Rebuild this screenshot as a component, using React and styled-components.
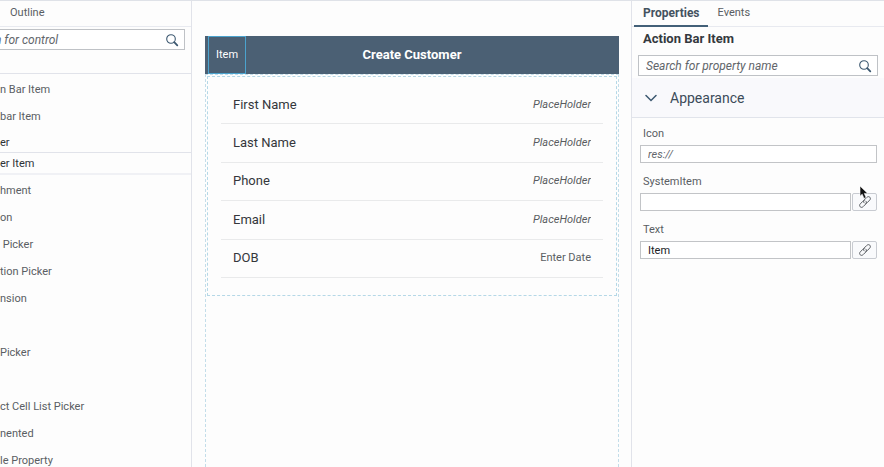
import React from "react";
import styled, { createGlobalStyle, css } from "styled-components";

const GlobalStyle = createGlobalStyle`
  *, *::before, *::after { box-sizing: border-box; }
  body {
    margin: 0;
    background: #fdfdfd;
    color: #5a5e63;
    font: 11px/16px Roboto, "Liberation Sans", sans-serif;
  }
  button, input { font: inherit; color: inherit; }
  input::placeholder { color: #62666b; font-style: italic; opacity: 1; }
`;

const Page = styled.div`
  display: flex;
  height: 100vh;
  overflow: hidden;
  border-top: 1px solid #dfe2e8;
`;

const Sidebar = styled.aside`
  flex: none;
  width: 192px;
  border-right: 1px solid #e1e3ea;
`;

const Canvas = styled.main`
  flex: 1;
  min-width: 0;
  display: flex;
  padding: 35px 12px 0 13px;
`;

const Inspector = styled.aside`
  flex: none;
  width: 253px;
  border-left: 1px solid #e1e3ea;
`;

const TabBar = styled.div`
  display: flex;
  height: 26px;
  padding: 0 2px;
  border-bottom: 1px solid #e8eaf0;
`;

const Tab = styled.button`
  height: 26px;
  padding: 0 10px;
  border: 0;
  border-bottom: 2px solid transparent;
  background: none;
  line-height: 24px;
  ${({ $active }) =>
    $active &&
    css`
      padding: 0 8px 0 9px;
      font-size: 12px;
      font-weight: 700;
      color: #44525f;
      border-bottom-color: #436078;
    `}
`;

const OutlineTab = styled(Tab)`
  padding: 0 8px;
`;

const SearchBox = styled.label`
  display: flex;
  align-items: center;
  height: 21px;
  padding-right: 5px;
  border: 1px solid #bfc2c6;
  background: #fff;
`;

const ControlSearch = styled(SearchBox)`
  margin: 2px 6px 0 0;
  border-left: 0;
`;

const PropertySearch = styled(SearchBox)`
  margin: 7px 6px 0;
`;

const SearchInput = styled.input`
  flex: 1;
  min-width: 0;
  height: 19px;
  padding: 0 0 0 7px;
  border: 0;
  outline: 0;
  background: none;
  font-size: 12px;
`;

const ControlSearchInput = styled(SearchInput)`
  padding-left: 0;
  text-indent: -5px;
`;

const ControlList = styled.ul`
  margin: 23px 0 0;
  padding: 2px 0 0;
  list-style: none;
  border-top: 1px solid #e1e3ea;
`;

const ControlItem = styled.li`
  height: 27px;
  line-height: 27px;
  white-space: pre;
  ${({ $heading }) =>
    $heading &&
    css`
      height: 22px;
      line-height: 25px;
      color: #2e3338;
    `}
  ${({ $selected }) =>
    $selected &&
    css`
      height: 23px;
      margin-bottom: 2px;
      line-height: 21px;
      color: #2e3338;
      border-top: 1px solid #e1e3ea;
      border-bottom: 2px solid #f0f1f5;
    `}
`;

const Device = styled.section`
  flex: 1;
  display: flex;
  flex-direction: column;
`;

const ActionBar = styled.header`
  display: grid;
  grid-template-columns: 1fr auto 1fr;
  align-items: center;
  height: 38px;
  padding: 0 3px;
  background: #4b6074;
  color: #fff;
`;

const ActionBarItem = styled.button`
  justify-self: start;
  height: 38px;
  padding: 0 7px;
  border: 1px solid #4ba3ce;
  background: none;
  color: #fff;
`;

const ActionBarTitle = styled.h1`
  margin: 0;
  font-size: 13px;
  line-height: 18px;
  font-weight: 700;
`;

const DeviceBody = styled.div`
  flex: 1;
  border: 1px dashed #c3dde9;
  border-bottom: 0;
`;

const FormSection = styled.form`
  margin: 1px 1px 0;
  padding: 9px 13px 17px;
  border: 1px dashed #b5d8e7;
`;

const FormRows = styled.div`
  display: grid;
  grid-template-rows: repeat(5, 1fr);
  height: 192px;
`;

const FormRow = styled.label`
  display: flex;
  align-items: center;
  justify-content: space-between;
  padding: 0 12px;
  border-bottom: 1px solid #e9eaeb;
`;

const FormLabel = styled.span`
  font-size: 13px;
  color: #34373b;
`;

const FormInput = styled.input`
  width: 120px;
  padding: 0;
  border: 0;
  outline: 0;
  background: none;
  text-align: right;
  &::placeholder { color: #595c60; }
`;

const DateButton = styled.button`
  padding: 0;
  border: 0;
  background: none;
`;

const InspectorTitle = styled.h2`
  margin: 3px 11px 0;
  font-size: 13px;
  line-height: 18px;
  font-weight: 700;
  color: #34393e;
`;

const GroupHeader = styled.button`
  display: flex;
  align-items: center;
  gap: 13px;
  width: 100%;
  height: 40px;
  margin-top: 2px;
  padding: 0 13px;
  border: 0;
  border-bottom: 1px solid #e1e4eb;
  background: #f9f9fc;
  color: #3c4b59;
  font-size: 14px;
`;

const Fields = styled.div`
  display: flex;
  flex-direction: column;
  gap: 11px;
  padding: 8px 7px 0 8px;
`;

const Field = styled.div`
  display: flex;
  flex-direction: column;
  gap: 3px;
`;

const FieldLabel = styled.label`
  padding-left: 3px;
`;

const FieldRow = styled.div`
  display: flex;
  gap: 1px;
`;

const FieldInput = styled.input`
  flex: 1;
  min-width: 0;
  height: 18px;
  padding: 0 7px;
  border: 1px solid #c2c4c7;
  background: #fff;
  color: #202225;
`;

const BindButton = styled.button`
  position: relative;
  display: flex;
  align-items: center;
  justify-content: center;
  width: 25px;
  height: 18px;
  padding: 0;
  border: 1px solid #c8cbd1;
  border-radius: 2px;
  background: #f9fafc;
  color: #595d62;
`;

const Pointer = styled.svg`
  position: absolute;
  left: 6px;
  top: -9px;
`;

function SearchIcon() {
  return (
    <svg width="14" height="14" viewBox="0 0 14 14" fill="none" stroke="#3c5870" aria-hidden="true">
      <circle cx="6" cy="6" r="4.3" strokeWidth="1.1" />
      <path d="M9.2 9.2l3.1 3.1" strokeWidth="1.8" strokeLinecap="round" />
    </svg>
  );
}

function ChevronIcon() {
  return (
    <svg width="12" height="12" viewBox="0 0 12 12" fill="none" stroke="#3c5870" strokeWidth="1.5" strokeLinecap="round" aria-hidden="true">
      <path d="M1 3.5l5 5 5-5" />
    </svg>
  );
}

function LinkIcon() {
  return (
    <svg width="14" height="14" viewBox="0 0 14 14" fill="none" stroke="currentColor" strokeWidth="1" strokeLinecap="round" aria-hidden="true">
      <path d="M6.2 7.9C5.2 7 5.3 6 6.1 5.1L8.8 2.4C9.8 1.4 11 1.4 11.8 2.2S12.6 4.2 11.7 5.1L9.2 7.7C8.8 8.1 8.3 8.3 7.8 8.3" />
      <path d="M7.8 6.1C8.8 7 8.7 8 7.9 8.9L5.2 11.6C4.2 12.6 3 12.6 2.2 11.8S1.4 9.8 2.3 8.9L4.8 6.3C5.2 5.9 5.7 5.7 6.2 5.7" />
    </svg>
  );
}

function PointerIcon() {
  return (
    <Pointer width="10" height="15" viewBox="0 0 10 15" aria-hidden="true">
      <path d="M1 1v10.2l2.2-2 1.8 4.2 2.1-.9-1.8-4.1H8.7z" fill="#111" stroke="#fff" strokeWidth=".6" />
    </Pointer>
  );
}

const controls = [
  { name: "n Bar Item" },
  { name: "bar Item" },
  { name: "er", heading: true },
  { name: "er Item", selected: true },
  { name: "hment" },
  { name: "on" },
  { name: " Picker" },
  { name: "tion Picker" },
  { name: "nsion" },
  { name: "" },
  { name: "Picker" },
  { name: "" },
  { name: "ct Cell List Picker" },
  { name: "nented" },
  { name: "le Property" },
];

const textFields = ["First Name", "Last Name", "Phone", "Email"];

export default function App() {
  return (
    <>
      <GlobalStyle />
      <Page>
        <Sidebar>
          <TabBar>
            <OutlineTab type="button">Outline</OutlineTab>
          </TabBar>
          <ControlSearch>
            <ControlSearchInput placeholder="h for control" aria-label="Search for control" />
            <SearchIcon />
          </ControlSearch>
          <ControlList>
            {controls.map(({ name, heading, selected }, i) => (
              <ControlItem key={i} $heading={heading} $selected={selected}>
                {name}
              </ControlItem>
            ))}
          </ControlList>
        </Sidebar>

        <Canvas>
          <Device>
            <ActionBar>
              <ActionBarItem type="button">Item</ActionBarItem>
              <ActionBarTitle>Create Customer</ActionBarTitle>
            </ActionBar>
            <DeviceBody>
              <FormSection>
                <FormRows>
                  {textFields.map((label) => (
                    <FormRow key={label}>
                      <FormLabel>{label}</FormLabel>
                      <FormInput placeholder="PlaceHolder" />
                    </FormRow>
                  ))}
                  <FormRow>
                    <FormLabel>DOB</FormLabel>
                    <DateButton type="button">Enter Date</DateButton>
                  </FormRow>
                </FormRows>
              </FormSection>
            </DeviceBody>
          </Device>
        </Canvas>

        <Inspector>
          <TabBar>
            <Tab type="button" $active>Properties</Tab>
            <Tab type="button">Events</Tab>
          </TabBar>
          <InspectorTitle>Action Bar Item</InspectorTitle>
          <PropertySearch>
            <SearchInput placeholder="Search for property name" aria-label="Search for property name" />
            <SearchIcon />
          </PropertySearch>
          <GroupHeader type="button" aria-expanded="true">
            <ChevronIcon />
            Appearance
          </GroupHeader>
          <Fields>
            <Field>
              <FieldLabel htmlFor="icon">Icon</FieldLabel>
              <FieldRow>
                <FieldInput id="icon" placeholder="res://" />
              </FieldRow>
            </Field>
            <Field>
              <FieldLabel htmlFor="system-item">SystemItem</FieldLabel>
              <FieldRow>
                <FieldInput id="system-item" />
                <BindButton type="button" aria-label="Bind SystemItem">
                  <LinkIcon />
                  <PointerIcon />
                </BindButton>
              </FieldRow>
            </Field>
            <Field>
              <FieldLabel htmlFor="text">Text</FieldLabel>
              <FieldRow>
                <FieldInput id="text" defaultValue="Item" />
                <BindButton type="button" aria-label="Bind Text">
                  <LinkIcon />
                </BindButton>
              </FieldRow>
            </Field>
          </Fields>
        </Inspector>
      </Page>
    </>
  );
}
